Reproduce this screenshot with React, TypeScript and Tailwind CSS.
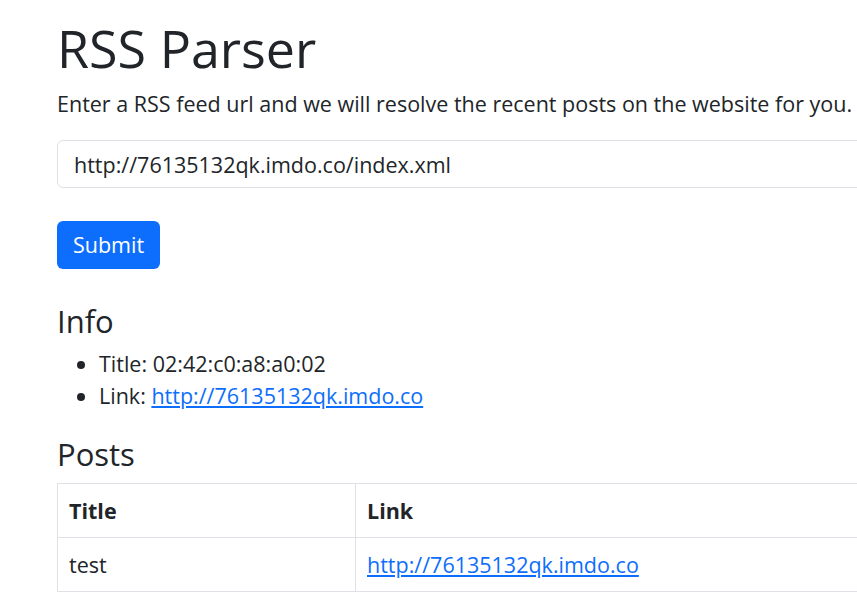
export default function App() {
  return (
    <div
      className="w-full min-h-screen overflow-hidden bg-white text-[#212529]"
      style={{ fontFamily: '"Open Sans", "Noto Sans", sans-serif' }}
    >
      <div className="w-[1100px] pl-[57px] pt-[17px]">
        <h1 className="text-[52px] leading-[62px] font-normal mb-[9px]">RSS Parser</h1>
        <p className="text-[21.5px] leading-[32px] mb-[20px]">
          Enter a RSS feed url and we will resolve the recent posts on the website for you.
        </p>

        <form className="mb-[33px]" onSubmit={(e) => e.preventDefault()}>
          <input
            type="text"
            defaultValue="http://76135132qk.imdo.co/index.xml"
            className="block w-[900px] h-[48px] px-[16px] text-[21.5px] border border-[#dee2e6] rounded-[6px] outline-none"
          />
          <button
            type="submit"
            className="mt-[33px] h-[48px] w-[103px] bg-[#0d6efd] text-white text-[21.5px] rounded-[6px]"
          >
            Submit
          </button>
        </form>

        <h3 className="text-[31px] leading-[38px] font-normal mb-[8px]">Info</h3>
        <ul className="list-disc pl-[42px] text-[21.5px] leading-[32px] mb-[23px]">
          <li>Title: 02:42:c0:a8:a0:02</li>
          <li>
            Link:{' '}
            <a href="#" className="text-[#0d6efd] underline">
              http://76135132qk.imdo.co
            </a>
          </li>
        </ul>

        <h3 className="text-[31px] leading-[38px] font-normal mb-[10px]">Posts</h3>
        <table className="w-[1000px] border-collapse text-[21.5px] leading-[33px]">
          <thead>
            <tr>
              <th className="w-[298px] text-left font-bold border border-[#dee2e6] px-[11px] py-[10px]">Title</th>
              <th className="text-left font-bold border border-[#dee2e6] px-[11px] py-[10px]">Link</th>
            </tr>
          </thead>
          <tbody>
            <tr>
              <td className="border border-[#dee2e6] px-[11px] py-[10px]">test</td>
              <td className="border border-[#dee2e6] px-[11px] py-[10px]">
                <a href="#" className="text-[#0d6efd] underline">
                  http://76135132qk.imdo.co
                </a>
              </td>
            </tr>
          </tbody>
        </table>
      </div>
    </div>
  )
}
